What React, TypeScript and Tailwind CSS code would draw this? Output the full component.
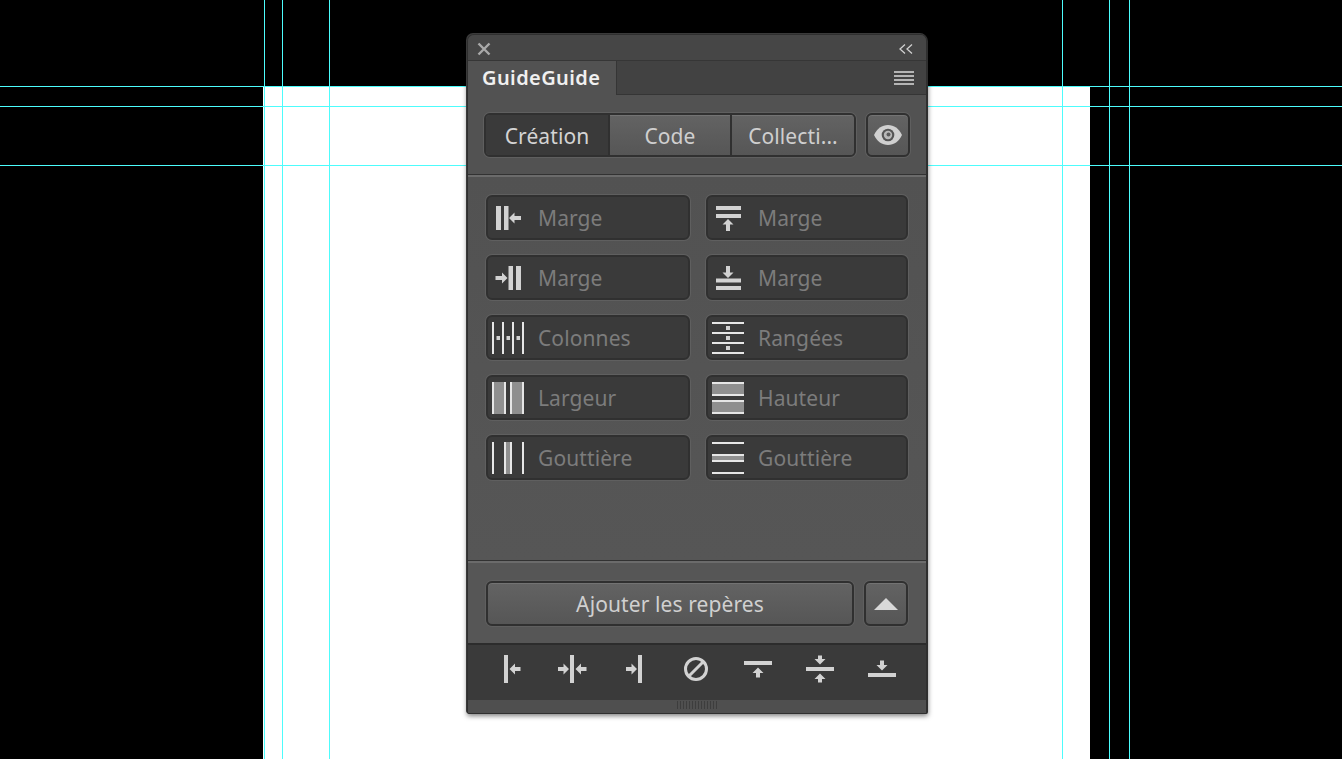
import React from "react";

const C = "#d2d2d2";
const G = "#8f8f8f";

function Box({ children, size = 32 }: { children: React.ReactNode; size?: number }) {
  return (
    <svg width={size} height={size} viewBox="0 0 32 32" className="shrink-0 block">
      {children}
    </svg>
  );
}
const R = ({ x, y, w, h, f = C }: { x: number; y: number; w: number; h: number; f?: string }) => (
  <rect x={x} y={y} width={w} height={h} fill={f} />
);
// arrows: tip at given point
const ArrowL = ({ x, y, len = 12 }: { x: number; y: number; len?: number }) => (
  <path d={`M${x} ${y}L${x + 5.5} ${y - 5.5}V${y - 2}H${x + len}V${y + 2}H${x + 5.5}V${y + 5.5}Z`} fill={C} />
);
const ArrowR = ({ x, y, len = 12 }: { x: number; y: number; len?: number }) => (
  <path d={`M${x} ${y}L${x - 5.5} ${y - 5.5}V${y - 2}H${x - len}V${y + 2}H${x - 5.5}V${y + 5.5}Z`} fill={C} />
);
const ArrowU = ({ x, y, len = 12 }: { x: number; y: number; len?: number }) => (
  <path d={`M${x} ${y}L${x + 5.5} ${y + 5.5}H${x + 2}V${y + len}H${x - 2}V${y + 5.5}H${x - 5.5}Z`} fill={C} />
);
const ArrowD = ({ x, y, len = 12 }: { x: number; y: number; len?: number }) => (
  <path d={`M${x} ${y}L${x + 5.5} ${y - 5.5}H${x + 2}V${y - len}H${x - 2}V${y - 5.5}H${x - 5.5}Z`} fill={C} />
);

const MargeLeft = () => (
  <Box><R x={4} y={4} w={5} h={24} /><R x={12} y={4} w={4.5} h={24} /><ArrowL x={17} y={16} /></Box>
);
const MargeRight = () => (
  <Box><ArrowR x={15.5} y={16} /><R x={16.5} y={4} w={4.5} h={24} /><R x={24} y={4} w={5} h={24} /></Box>
);
const MargeTop = () => (
  <Box><R x={4} y={4} w={25} h={4} /><R x={4} y={12} w={25} h={4} /><ArrowU x={16} y={17} /></Box>
);
const MargeBottom = () => (
  <Box><ArrowD x={16} y={16} /><R x={4} y={16.5} w={25} h={4} /><R x={4} y={24} w={25} h={4} /></Box>
);
const Colonnes = () => (
  <Box>
    {[0, 10, 20, 30].map((x) => <R key={x} x={x} y={0} w={2} h={32} f="#e6e6e6" />)}
    {[4.5, 14.5, 24.5].map((x) => <R key={x} x={x} y={14} w={3.5} h={4} />)}
  </Box>
);
const Rangees = () => (
  <Box>
    {[0, 10, 20, 30].map((y) => <R key={y} x={0} y={y} w={32} h={2} f="#e6e6e6" />)}
    {[4, 14, 24].map((y) => <R key={y} x={14} y={y} w={4} h={4} />)}
  </Box>
);
const Largeur = () => (
  <Box>
    <R x={2} y={0} w={10} h={32} f={G} /><R x={20} y={0} w={10} h={32} f={G} />
    {[0, 12, 18, 30].map((x) => <R key={x} x={x} y={0} w={2} h={32} f="#e6e6e6" />)}
  </Box>
);
const Hauteur = () => (
  <Box>
    <R x={0} y={2} w={32} h={10} f={G} /><R x={0} y={20} w={32} h={10} f={G} />
    {[0, 12, 18, 30].map((y) => <R key={y} x={0} y={y} w={32} h={2} f="#e6e6e6" />)}
  </Box>
);
const GutterV = () => (
  <Box>
    <R x={14} y={0} w={4} h={32} f={G} />
    {[0, 12, 18, 30].map((x) => <R key={x} x={x} y={0} w={2} h={32} f="#e6e6e6" />)}
  </Box>
);
const GutterH = () => (
  <Box>
    <R x={0} y={14} w={32} h={4} f={G} />
    {[0, 12, 18, 30].map((y) => <R key={y} x={0} y={y} w={32} h={2} f="#e6e6e6" />)}
  </Box>
);

const fields: { icon: React.ReactNode; label: string }[] = [
  { icon: <MargeLeft />, label: "Marge" },
  { icon: <MargeTop />, label: "Marge" },
  { icon: <MargeRight />, label: "Marge" },
  { icon: <MargeBottom />, label: "Marge" },
  { icon: <Colonnes />, label: "Colonnes" },
  { icon: <Rangees />, label: "Rangées" },
  { icon: <Largeur />, label: "Largeur" },
  { icon: <Hauteur />, label: "Hauteur" },
  { icon: <GutterV />, label: "Gouttière" },
  { icon: <GutterH />, label: "Gouttière" },
];

const footerIcons: React.ReactNode[] = [
  <Box key="1"><R x={10} y={2} w={4} h={28} /><ArrowL x={15.5} y={16} len={11} /></Box>,
  <Box key="2"><ArrowR x={13} y={16} len={11} /><R x={14} y={2} w={4} h={28} /><ArrowL x={19.5} y={16} len={11} /></Box>,
  <Box key="3"><ArrowR x={19} y={16} len={11} /><R x={20} y={2} w={4} h={28} /></Box>,
  <Box key="4">
    <circle cx={16} cy={16} r={10.5} fill="none" stroke={C} strokeWidth={3} />
    <path d="M8.5 23.5L23.5 8.5" stroke={C} strokeWidth={3} />
  </Box>,
  <Box key="5"><R x={2} y={8} w={28} h={4} /><ArrowU x={16} y={14.5} len={10} /></Box>,
  <Box key="6"><ArrowD x={16} y={11.5} len={9} /><R x={2} y={14} w={28} h={4} /><ArrowU x={16} y={20.5} len={9} /></Box>,
  <Box key="7"><ArrowD x={16} y={17.5} len={10} /><R x={2} y={20} w={28} h={4} /></Box>,
];

const guides = [
  "left-[264px] top-0 w-px h-full",
  "left-[282px] top-0 w-px h-full",
  "left-[329px] top-0 w-px h-full",
  "left-[1062px] top-0 w-px h-full",
  "left-[1109px] top-0 w-px h-full",
  "left-[1129px] top-0 w-px h-full",
  "left-0 top-[86px] h-px w-full",
  "left-0 top-[106px] h-px w-full",
  "left-0 top-[165px] h-px w-full",
];

const ring = "shadow-[0_0_0_1px_#5f5f5f]";
const segment = "bg-gradient-to-b from-[#636363] to-[#565656] shadow-[inset_0_1px_0_#737373]";
const raised = "bg-gradient-to-b from-[#636363] to-[#565656] shadow-[inset_0_1px_0_#737373,0_0_0_1px_#5f5f5f]";
const label = "pt-[3px] text-[21px] tracking-[0.1px]";

export default function App() {
  return (
    <div
      className="relative h-[759px] w-full overflow-hidden bg-black pt-[87px]"
      style={{ fontFamily: '"Noto Sans", "Open Sans", sans-serif' }}
    >
      <div className="ml-[263px] h-[672px] w-[827px] bg-white" />
      {guides.map((g) => (
        <div key={g} className={`absolute bg-[#4dfcfc] ${g}`} />
      ))}

      <div className="absolute left-[467px] top-[34px] flex w-[461px] flex-col overflow-hidden rounded-t-[7px] rounded-b-[2px] border-y border-l border-r-2 border-[#2f2f2f] bg-[#454545] shadow-[-1px_-1px_0_#3a3a3a,0_2px_5px_rgba(0,0,0,0.5)]">
        {/* title bar */}
        <div className="flex h-[26px] items-center justify-between border-b border-[#363636] bg-[#464646] pl-[9px] pr-[13px] pt-[3px]">
          <svg width="14" height="14" viewBox="0 0 14 14">
            <path d="M1.5 1.5L12.5 12.5M12.5 1.5L1.5 12.5" stroke="#a9a9a9" strokeWidth="2.4" />
          </svg>
          <svg width="15" height="12" viewBox="0 0 15 12">
            <path d="M7 1.5L2 6L7 10.5M14 1.5L9 6L14 10.5" fill="none" stroke="#cfcfcf" strokeWidth="1.3" />
          </svg>
        </div>
        {/* tabs */}
        <div className="flex h-[34px] items-stretch bg-[#424242]">
          <div className="flex w-[149px] items-center border-r border-[#353535] bg-[#525252] pl-[14px] text-[20px] font-semibold tracking-[0.4px] text-[#f0f0f0]">
            GuideGuide
          </div>
          <div className="flex flex-1 flex-col items-end justify-center gap-[2px] border-b border-[#353535] pr-[12px]">
            {[0, 1, 2, 3].map((i) => (
              <div key={i} className="h-[2px] w-[20px] bg-[#b4b4b4]" />
            ))}
          </div>
        </div>
        {/* mode row */}
        <div className="flex h-[79px] items-start gap-[10px] bg-[#525252] pl-[16px] pt-[18px]">
          <div className={`flex h-[44px] w-[372px] overflow-hidden rounded-[6px] border-2 border-[#303030] ${ring}`}>
            <div className="flex w-[124px] items-center justify-center border-r-2 border-[#303030] bg-[#3a3a3a] text-[#d4d4d4]"><span className={label}>Création</span></div>
            <div className={`flex w-[122px] items-center justify-center border-r-2 border-[#303030] text-[#cfcfcf] ${segment}`}><span className={label}>Code</span></div>
            <div className={`flex flex-1 items-center justify-center text-[#cfcfcf] ${segment}`}><span className={label}>Collecti...</span></div>
          </div>
          <div className={`flex h-[44px] w-[44px] items-center justify-center rounded-[6px] border-2 border-[#303030] ${raised}`}>
            <svg width="28" height="20" viewBox="0 0 28 20">
              <path d="M0 10C3 3.5 8 0 14 0S25 3.5 28 10C25 16.5 20 20 14 20S3 16.5 0 10Z" fill="#d0d0d0" />
              <circle cx="14" cy="10" r="6.3" fill="#555555" />
              <circle cx="14" cy="10" r="4.2" fill="#b8b8b8" />
              <circle cx="14.5" cy="9.5" r="2" fill="#5a5a5a" />
            </svg>
          </div>
        </div>
        <div className="h-[3px] border-b-2 border-t border-b-[#6b6b6b] border-t-[#323232]" />
        {/* form */}
        <div className="h-[383px] bg-gradient-to-b from-[#525252] to-[#565656] pl-[18px] pt-[18px]">
          <div className="grid grid-cols-[204px_202px] gap-x-[16px] gap-y-[15px]">
            {fields.map((f, i) => (
              <div
                key={i}
                className={`flex h-[45px] items-center gap-[14px] rounded-[6px] border-2 border-[#303030] bg-[#3a3a3a] pl-[4px] ${ring}`}
              >
                {f.icon}
                <span className={`${label} text-[#7c7c7c]`}>{f.label}</span>
              </div>
            ))}
          </div>
        </div>
        <div className="h-[3px] border-b-2 border-t border-b-[#6b6b6b] border-t-[#323232]" />
        {/* action */}
        <div className="flex h-[80px] items-start gap-[10px] bg-[#565656] pl-[18px] pt-[18px]">
          <div className={`flex h-[45px] w-[368px] items-center justify-center rounded-[6px] border-2 border-[#303030] text-[#d0d0d0] ${raised}`}>
            <span className={label}>Ajouter les repères</span>
          </div>
          <div className={`flex h-[45px] w-[44px] items-center justify-center rounded-[6px] border-2 border-[#303030] ${raised}`}>
            <svg width="24" height="12" viewBox="0 0 24 12"><path d="M12 0L24 12H0Z" fill="#d8d8d8" /></svg>
          </div>
        </div>
        {/* alignment */}
        <div className="flex h-[57px] items-start gap-[30px] border-t-2 border-[#2c2c2c] bg-[#3a3a3a] pl-[26px] pt-[8px]">
          {footerIcons}
        </div>
        {/* resize */}
        <div className="flex h-[13px] justify-center gap-[2px] bg-[#4f4f4f] pt-[1px]">
          {Array.from({ length: 14 }).map((_, i) => (
            <div key={i} className="h-[8px] w-px bg-[#3d3d3d]" />
          ))}
        </div>
      </div>
    </div>
  );
}
